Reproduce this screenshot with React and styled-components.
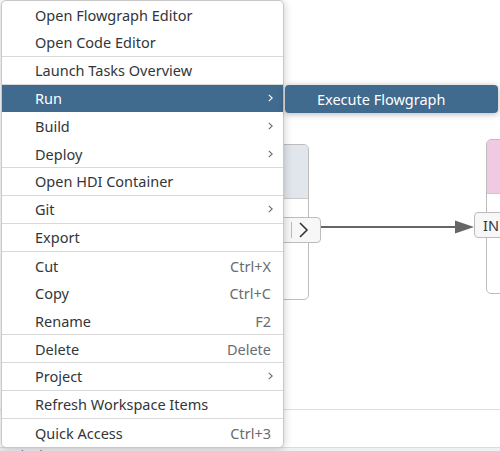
import React from "react";
import styled, { createGlobalStyle } from "styled-components";

const Global = createGlobalStyle`
  html, body { margin: 0; padding: 0; }
  body { width: 500px; height: 451px; overflow: hidden; background: #ffffff;
    font-family: "Noto Sans", "Liberation Sans", sans-serif; }
`;

const Page = styled.div`
  position: relative;
  width: 500px;
  height: 451px;
  overflow: hidden;
  background: #ffffff;
`;

const TopButtons = styled.div`
  display: flex;
  gap: 4px;
  padding-left: 156px;
  height: 3px;
`;
const TopBtn = styled.div`
  width: 18px;
  height: 3px;
  background: #1f6fb5;
`;

const Canvas = styled.div`
  position: absolute;
  inset: 0;
`;

const Node = styled.div`
  position: absolute;
  box-sizing: border-box;
  border: 1px solid #bdbdbd;
  border-radius: 5px;
  background: #ffffff;
  overflow: hidden;
`;

const NodeHeader = styled.div`
  height: ${(p) => p.$h}px;
  background: ${(p) => p.$color};
  border-bottom: 1px solid #c9c9c9;
`;

const Port = styled.div`
  position: absolute;
  box-sizing: border-box;
  display: flex;
  align-items: center;
  border: 1px solid #bcbcbc;
  border-radius: 4px;
  background: #f7f7f7;
  color: #32363a;
  font-size: 14.5px;
`;

const PortSpacer = styled.div`
  flex: 1;
`;

const PortDivider = styled.div`
  width: 1px;
  align-self: stretch;
  background: #bcbcbc;
  margin: 4px 0;
`;

const Wire = styled.svg`
  position: absolute;
  overflow: visible;
`;

const HLine = styled.div`
  position: absolute;
  left: 0;
  right: 0;
  top: 409px;
  height: 1px;
  background: #dedede;
`;

const BottomStrip = styled.div`
  position: absolute;
  left: 0;
  right: 0;
  top: 447px;
  bottom: 0;
  background: #eef1f4;
  border-top: 1px solid #d9dde2;
  font-size: 13px;
  color: #6a6d70;
  padding-left: 12px;
  line-height: 14px;
  overflow: hidden;
`;

const Menu = styled.div`
  position: absolute;
  left: 1px;
  top: 0;
  width: 283px;
  box-sizing: border-box;
  background: #ffffff;
  border: 1px solid #c8c8c8;
  border-radius: 5px;
  box-shadow: 0 1px 8px rgba(0, 0, 0, 0.22);
  display: flex;
  flex-direction: column;
  overflow: hidden;
`;

const Item = styled.div`
  box-sizing: border-box;
  height: 27.85px;
  display: flex;
  align-items: center;
  padding: 0 10px 0 33px;
  font-size: 14.5px;
  color: ${(p) => (p.$active ? "#ffffff" : "#32363a")};
  background: ${(p) => (p.$active ? "#406a8e" : "transparent")};
  border-bottom: ${(p) => (p.$sep ? "1px solid #d9d9d9" : "none")};
  white-space: nowrap;
`;

const Label = styled.span`
  flex: 1;
`;

const Shortcut = styled.span`
  color: #6a6d70;
  margin-right: 2px;
`;

const Chevron = styled.svg`
  width: 5px;
  height: 8px;
  margin-right: 0;
`;

const SubMenu = styled.div`
  position: absolute;
  left: 285px;
  top: 85px;
  width: 213px;
  height: 28px;
  box-sizing: border-box;
  background: #406a8e;
  border-radius: 4px;
  box-shadow: 0 1px 6px rgba(0, 0, 0, 0.3);
  color: #ffffff;
  font-size: 14.5px;
  display: flex;
  align-items: center;
  padding-left: 32px;
`;

const items = [
  { label: "Open Flowgraph Editor" },
  { label: "Open Code Editor", sep: true },
  { label: "Launch Tasks Overview", sep: true },
  { label: "Run", sub: true, active: true },
  { label: "Build", sub: true },
  { label: "Deploy", sub: true, sep: true },
  { label: "Open HDI Container", sep: true },
  { label: "Git", sub: true, sep: true },
  { label: "Export", sep: true },
  { label: "Cut", shortcut: "Ctrl+X" },
  { label: "Copy", shortcut: "Ctrl+C" },
  { label: "Rename", shortcut: "F2", sep: true },
  { label: "Delete", shortcut: "Delete", sep: true },
  { label: "Project", sub: true, sep: true },
  { label: "Refresh Workspace Items", sep: true },
  { label: "Quick Access", shortcut: "Ctrl+3" },
];

const ChevronIcon = ({ light }) => (
  <Chevron viewBox="0 0 5 8">
    <polyline
      points="0.8,0.8 4.2,4 0.8,7.2"
      fill="none"
      stroke={light ? "#ffffff" : "#6a6d70"}
      strokeWidth="1.1"
    />
  </Chevron>
);

export default function App() {
  return (
    <Page>
      <Global />
      <TopButtons>
        <TopBtn />
        <TopBtn />
      </TopButtons>
      <Canvas>
        <Node style={{ left: 240, top: 144, width: 69, height: 156 }}>
          <NodeHeader $h={53} $color="#e1e6ec" />
        </Node>
        <Port style={{ left: 270, top: 217, width: 51, height: 26 }}>
          <PortSpacer />
          <PortDivider />
          <svg width="28" height="24" viewBox="0 0 28 24">
            <polyline points="8,5 15,12 8,19" fill="none" stroke="#32363a" strokeWidth="1.6" />
          </svg>
        </Port>
        <Wire style={{ left: 321, top: 219 }} width="154" height="16" viewBox="0 0 154 16">
          <line x1="0" y1="8" x2="138" y2="8" stroke="#666666" strokeWidth="2" />
          <polygon points="134,1.5 153,8 134,14.5" fill="#666666" />
        </Wire>
        <Node style={{ left: 486, top: 139, width: 40, height: 155 }}>
          <NodeHeader $h={53} $color="#f0c9e2" />
        </Node>
        <Port style={{ left: 474, top: 212, width: 40, height: 26, paddingLeft: 8 }}>
          IN
        </Port>
        <HLine />
        <BottomStrip>(deployment)</BottomStrip>
      </Canvas>
      <Menu>
        {items.map((it) => (
          <Item key={it.label} $active={it.active} $sep={it.sep}>
            <Label>{it.label}</Label>
            {it.shortcut && <Shortcut>{it.shortcut}</Shortcut>}
            {it.sub && <ChevronIcon light={it.active} />}
          </Item>
        ))}
      </Menu>
      <SubMenu>Execute Flowgraph</SubMenu>
    </Page>
  );
}
